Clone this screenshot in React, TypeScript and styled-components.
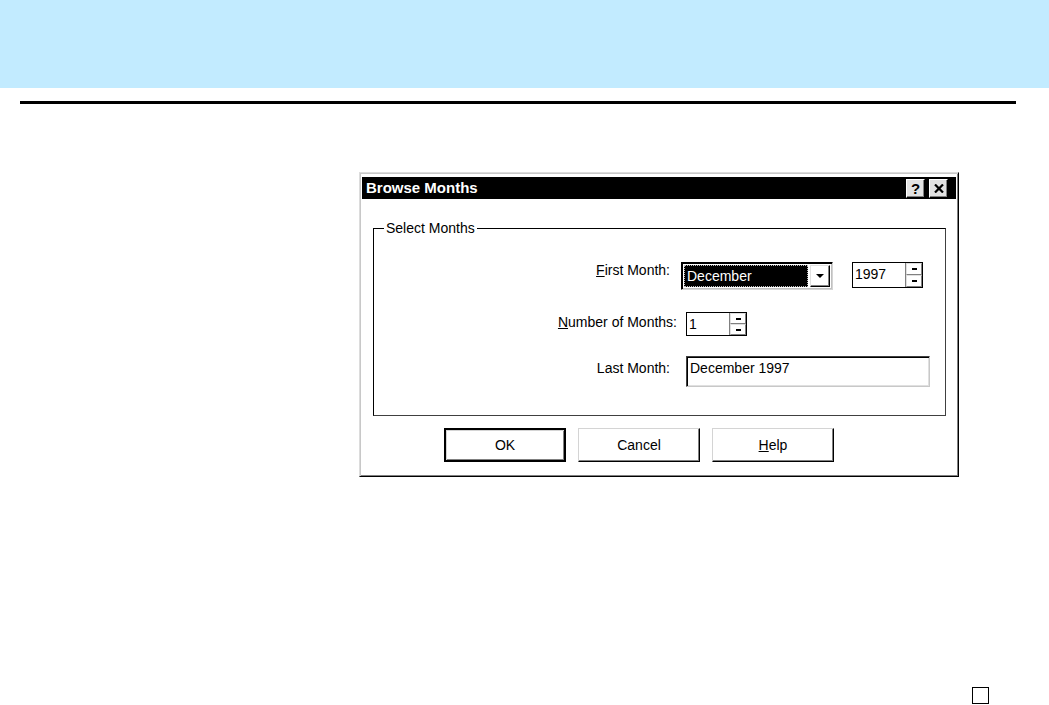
import React from 'react';
import styled, { createGlobalStyle } from 'styled-components';

const GlobalStyle = createGlobalStyle`
  html, body {
    margin: 0;
    padding: 0;
    background: #fff;
  }
  body {
    font-family: "Liberation Sans", Arial, sans-serif;
    color: #000;
  }
`;

const Page = styled.div`
  width: 1049px;
  height: 705px;
  display: flex;
  flex-direction: column;
  overflow: hidden;
`;

const Banner = styled.div`
  height: 88px;
  flex-shrink: 0;
  background: #c2ebff;
`;

const Rule = styled.div`
  margin: 13px 0 0 20px;
  width: 996px;
  height: 3px;
  background: #000;
`;

const Stage = styled.div`
  flex: 1;
  padding: 68px 0 0 359px;
`;

const Footer = styled.div`
  display: flex;
  justify-content: flex-end;
  padding: 0 60px 1px 0;
`;

const Marker = styled.div`
  width: 15px;
  height: 15px;
  border: 1px solid #000;
`;

const Dialog = styled.div`
  width: 600px;
  height: 305px;
  box-sizing: border-box;
  background: #fff;
  border: 1px solid;
  border-color: #dcdcdc #000 #000 #dcdcdc;
  box-shadow: inset 1px 1px #c8c8c8, inset -1px -1px #808080;
  padding: 4px 2px 2px 2px;
  display: flex;
  flex-direction: column;
`;

const TitleBar = styled.div`
  height: 22px;
  background: #000;
  display: flex;
  align-items: center;
  justify-content: space-between;
  padding: 0 8px 0 4px;
`;

const Title = styled.span`
  color: #fff;
  font-weight: bold;
  font-size: 15px;
  line-height: 18px;
`;

const TitleButtons = styled.div`
  display: flex;
  gap: 4px;
`;

const TitleButton = styled.div`
  width: 19px;
  height: 19px;
  box-sizing: border-box;
  background: #e2e2e2;
  border: 1px solid;
  border-color: #fff #000 #000 #fff;
  box-shadow: inset -1px -1px #808080;
  display: flex;
  align-items: center;
  justify-content: center;
  font-weight: bold;
  font-size: 15px;
  line-height: 15px;
  color: #000;
`;

const GroupBox = styled.div`
  position: relative;
  margin: 29px 10px 0 11px;
  height: 188px;
  box-sizing: border-box;
  border: 1px solid;
  border-color: #000 #404040 #404040 #000;
  padding-top: 33px;
  display: flex;
  flex-direction: column;
`;

const Legend = styled.span`
  position: absolute;
  top: -9px;
  left: 10px;
  padding: 0 2px;
  background: #fff;
  font-size: 14px;
  line-height: 16px;
`;

const FormRow = styled.div<{ $h: number; $mt: number }>`
  display: flex;
  align-items: flex-start;
  height: ${p => p.$h}px;
  margin-top: ${p => p.$mt}px;
`;

const Label = styled.label<{ $w: number; $top: number }>`
  width: ${p => p.$w}px;
  flex-shrink: 0;
  text-align: right;
  font-size: 14px;
  line-height: 16px;
  padding-top: ${p => p.$top}px;
  white-space: nowrap;
`;

const Key = styled.span`
  text-decoration: underline;
`;

const Combo = styled.div<{ $ml: number }>`
  margin-left: ${p => p.$ml}px;
  width: 152px;
  height: 28px;
  box-sizing: border-box;
  display: flex;
  padding: 2px;
  border: 1px solid;
  border-color: #000 #d4d4d4 #d4d4d4 #000;
  box-shadow: inset 1px 1px #000, inset -1px -1px #c0c0c0;
`;

const ComboValue = styled.div`
  flex: 1;
  background: #000;
  color: #fff;
  border: 1px dotted #bdbdbd;
  font-size: 14px;
  line-height: 20px;
  padding-left: 2px;
  margin-right: 2px;
`;

const DropButton = styled.div`
  width: 20px;
  box-sizing: border-box;
  background: #fff;
  border: 1px solid;
  border-color: #e0e0e0 #000 #000 #e0e0e0;
  box-shadow: inset -1px -1px #808080;
  display: flex;
  align-items: center;
  justify-content: center;
`;

const SpinBox = styled.div<{ $w: number; $h: number; $ml: number }>`
  margin-left: ${p => p.$ml}px;
  width: ${p => p.$w}px;
  height: ${p => p.$h}px;
  box-sizing: border-box;
  display: flex;
  border: 1px solid #000;
`;

const SpinText = styled.div`
  flex: 1;
  background: #fff;
  font-size: 14px;
  line-height: 18px;
  padding: 2px 0 0 2px;
  border-right: 1px solid #808080;
`;

const SpinButtons = styled.div`
  width: 16px;
  display: flex;
  flex-direction: column;
`;

const SpinButton = styled.div`
  flex: 1;
  box-sizing: border-box;
  background: #fff;
  border: 1px solid;
  border-color: #e0e0e0 #808080 #808080 #e0e0e0;
  display: flex;
  align-items: center;
  justify-content: center;
`;

const SpinMark = styled.div`
  width: 5px;
  height: 2px;
  background: #000;
`;

const TextField = styled.div<{ $ml: number }>`
  margin-left: ${p => p.$ml}px;
  width: 244px;
  height: 31px;
  box-sizing: border-box;
  border: 1px solid;
  border-color: #404040 #c8c8c8 #c8c8c8 #404040;
  box-shadow: inset 1px 1px #000, inset -1px -1px #e0e0e0;
  font-size: 14px;
  line-height: 16px;
  padding: 3px 0 0 3px;
`;

const ButtonRow = styled.div`
  display: flex;
  gap: 12px;
  margin-top: 12px;
  padding-left: 82px;
`;

const PushButton = styled.div<{ $default?: boolean }>`
  width: 122px;
  height: 34px;
  box-sizing: border-box;
  background: #fff;
  border: ${p => (p.$default ? '2px' : '1px')} solid;
  border-color: ${p => (p.$default ? '#000' : '#d4d4d4 #000 #000 #d4d4d4')};
  box-shadow: ${p =>
    p.$default
      ? 'inset 1px 1px #d4d4d4, inset -1px -1px #808080'
      : 'inset -1px -1px #808080'};
  display: flex;
  align-items: center;
  justify-content: center;
  font-size: 14px;
  line-height: 16px;
`;

const Spinner: React.FC<{ value: string; w: number; h: number; ml: number }> = ({ value, w, h, ml }) => (
  <SpinBox $w={w} $h={h} $ml={ml}>
    <SpinText>{value}</SpinText>
    <SpinButtons>
      <SpinButton><SpinMark /></SpinButton>
      <SpinButton><SpinMark /></SpinButton>
    </SpinButtons>
  </SpinBox>
);

const App: React.FC = () => (
  <>
    <GlobalStyle />
    <Page>
      <Banner />
      <Rule />
      <Stage>
        <Dialog>
          <TitleBar>
            <Title>Browse Months</Title>
            <TitleButtons>
              <TitleButton>?</TitleButton>
              <TitleButton>
                <svg width="10" height="9" viewBox="0 0 10 9">
                  <path d="M1 0.5 L9 8.5 M9 0.5 L1 8.5" stroke="#000" strokeWidth="2.2" />
                </svg>
              </TitleButton>
            </TitleButtons>
          </TitleBar>

          <GroupBox>
            <Legend>Select Months</Legend>

            <FormRow $h={28} $mt={0}>
              <Label $w={296} $top={0}><Key>F</Key>irst Month:</Label>
              <Combo $ml={11}>
                <ComboValue>December</ComboValue>
                <DropButton>
                  <svg width="8" height="4" viewBox="0 0 8 4">
                    <path d="M0 0 H8 L4 4 Z" fill="#000" />
                  </svg>
                </DropButton>
              </Combo>
              <Spinner value="1997" w={71} h={26} ml={19} />
            </FormRow>

            <FormRow $h={24} $mt={22}>
              <Label $w={303} $top={2}><Key>N</Key>umber of Months:</Label>
              <Spinner value="1" w={61} h={24} ml={9} />
            </FormRow>

            <FormRow $h={31} $mt={20}>
              <Label $w={296} $top={4}>Last Month:</Label>
              <TextField $ml={16}>December 1997</TextField>
            </FormRow>
          </GroupBox>

          <ButtonRow>
            <PushButton $default>OK</PushButton>
            <PushButton>Cancel</PushButton>
            <PushButton><span><Key>H</Key>elp</span></PushButton>
          </ButtonRow>
        </Dialog>
      </Stage>
      <Footer>
        <Marker />
      </Footer>
    </Page>
  </>
);

export default App;
